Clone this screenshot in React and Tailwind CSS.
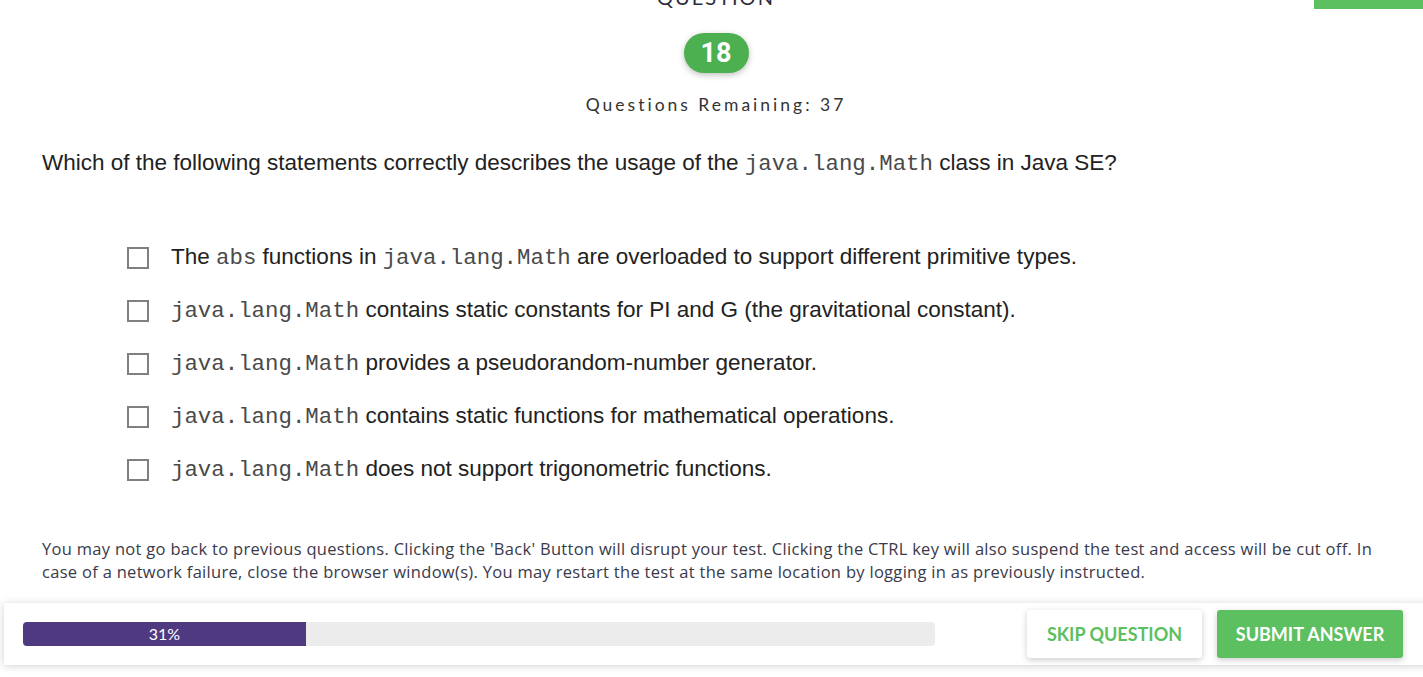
import React from "react";

const Code = ({ children }) => (
  <span className="font-['Liberation_Mono',monospace] text-[22.4px] tracking-[0px] text-[#4a4a4a]">{children}</span>
);

const options = [
  <>The <Code>abs</Code> functions in <Code>java.lang.Math</Code> are overloaded to support different primitive types.</>,
  <><Code>java.lang.Math</Code> contains static constants for PI and G (the gravitational constant).</>,
  <><Code>java.lang.Math</Code> provides a pseudorandom-number generator.</>,
  <><Code>java.lang.Math</Code> contains static functions for mathematical operations.</>,
  <><Code>java.lang.Math</Code> does not support trigonometric functions.</>,
];

export default function App() {
  return (
    <div className="relative w-[1423px] h-[677px] overflow-hidden bg-white font-['Lato','Open_Sans',sans-serif]">
      <div className="absolute top-0 right-0 w-[109px] h-[9px] bg-[#5cbf60]" />
      <div className="pl-[9px] mt-[-14px] text-center text-[20px] leading-[22px] tracking-[2px] text-[#2b2b3a]">QUESTION</div>
      <div className="pl-[9px] mt-[25px] flex justify-center">
        <div className="flex h-[40px] w-[65px] items-center justify-center rounded-full bg-[#4caf50] shadow-[0_2px_6px_rgba(0,0,0,0.25)] text-[27px] font-bold text-white font-['Roboto',sans-serif]">18</div>
      </div>
      <div className="pl-[9px] mt-[20px] text-center text-[17.5px] leading-[24px] tracking-[3px] text-[#333]">Questions Remaining: 37</div>
      <div className="mt-[31px] px-[42px] text-[22.5px] leading-[30px] text-[#222] font-['Liberation_Sans',Arial,sans-serif]">
        Which of the following statements correctly describes the usage of the <Code>java.lang.Math</Code> class in Java SE?
      </div>
      <div className="mt-[52px] pl-[127px] flex flex-col">
        {options.map((o, i) => (
          <div key={i} className="flex h-[53px] items-center gap-[22px]">
            <div className="h-[22px] w-[22px] shrink-0 border-2 border-[#808080] bg-white" />
            <div className="text-[22.5px] leading-[30px] text-[#222] font-['Liberation_Sans',Arial,sans-serif]">{o}</div>
          </div>
        ))}
      </div>
      <div className="mt-[41px] px-[42px] text-[16.5px] leading-[23px] text-[#3a3a4a] font-['Open_Sans',sans-serif] tracking-[0.3px]">
        You may not go back to previous questions. Clicking the 'Back' Button will disrupt your test. Clicking the CTRL key will also suspend the test and access will be cut off. In case of a network failure, close the browser window(s). You may restart the test at the same location by logging in as previously instructed.
      </div>
      <div className="mt-[20px] ml-[4px] flex h-[62px] w-[1430px] items-center bg-white pl-[19px] pr-[31px] shadow-[0_1px_8px_rgba(0,0,0,0.18)]">
        <div className="relative h-[24px] w-[912px] overflow-hidden rounded-[4px] bg-[#ececec]">
          <div className="flex h-full w-[283px] items-center justify-center bg-[#4f3a82] text-[16px] text-white">31%</div>
        </div>
        <div className="ml-auto flex gap-[15px]">
          <button className="h-[48px] w-[175px] rounded-[3px] bg-white text-[18px] font-bold text-[#5cbf60] shadow-[0_2px_6px_rgba(0,0,0,0.2)]">SKIP QUESTION</button>
          <button className="h-[48px] w-[186px] rounded-[3px] bg-[#5cbf60] text-[18px] font-bold text-white shadow-[0_2px_6px_rgba(0,0,0,0.2)]">SUBMIT ANSWER</button>
        </div>
      </div>
    </div>
  );
}
